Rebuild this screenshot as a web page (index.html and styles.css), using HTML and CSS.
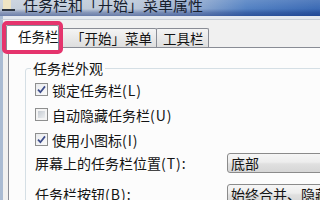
FILE: index.html
```html
<!DOCTYPE html>
<html lang="zh-CN">
<head>
<meta charset="utf-8">
<title>任务栏和「开始」菜单属性</title>
<link rel="stylesheet" href="styles.css">
</head>
<body>
<div class="window">
  <div class="titlebar">
    <svg class="app-icon" width="14" height="12" viewBox="0 0 14 12" aria-hidden="true">
      <rect x="1" y="0" width="8" height="9" fill="#eee4c4"/>
      <rect x="0" y="9" width="13" height="2" fill="#2c3542"/>
    </svg>
    <span class="title">任务栏和「开始」菜单属性</span>
  </div>
  <div class="frame-sep"></div>
  <div class="dialog">
    <div class="tabs">
      <div class="tab tab-active">任务栏</div>
      <div class="tab tab-start">「开始」菜单</div>
      <div class="tab tab-tools">工具栏</div>
    </div>
    <div class="panel">
      <fieldset class="group">
        <legend>任务栏外观</legend>
        <div class="row">
          <span class="cb cb-on"><svg width="11" height="11" viewBox="0 0 11 11" aria-hidden="true"><path d="M2 5.6 L4.4 8.2 L9 2.4" fill="none" stroke="#3d4c8a" stroke-width="1.7"/></svg></span>
          <span>锁定任务栏<span class="key">(L)</span></span>
        </div>
        <div class="row">
          <span class="cb cb-off"></span>
          <span>自动隐藏任务栏<span class="key">(U)</span></span>
        </div>
        <div class="row">
          <span class="cb cb-on"><svg width="11" height="11" viewBox="0 0 11 11" aria-hidden="true"><path d="M2 5.6 L4.4 8.2 L9 2.4" fill="none" stroke="#3d4c8a" stroke-width="1.7"/></svg></span>
          <span>使用小图标<span class="key">(I)</span></span>
        </div>
        <div class="row select-row">
          <span class="label">屏幕上的任务栏位置<span class="key">(T):</span></span>
          <div class="combo">底部</div>
        </div>
        <div class="row select-row second">
          <span class="label">任务栏按钮<span class="key">(B):</span></span>
          <div class="combo">始终合并、隐藏标签</div>
        </div>
      </fieldset>
    </div>
  </div>
</div>
</body>
</html>
```

FILE: styles.css
```css
html, body {
  margin: 0;
  padding: 0;
  overflow: hidden;
}

body {
  width: 320px;
  height: 200px;
  background: #f0f0f0;
  font-family: "Noto Sans CJK SC", "Noto Sans", sans-serif;
  color: #141414;
}

.window {
  width: 440px;
}

.titlebar {
  display: flex;
  align-items: flex-start;
  height: 16px;
  padding-left: 2px;
  background:
    linear-gradient(180deg, rgba(255,255,255,0.12) 0%, rgba(255,255,255,0) 55%, rgba(0,30,110,0.30) 78%, rgba(0,30,110,0.45) 100%),
    linear-gradient(90deg, #c7d0dc 0%, #bcc8d8 30%, #93abcf 44%, #5482c3 56%, #3c6bb5 72%, #4c7cc2 100%);
}

.app-icon {
  display: block;
  flex: none;
  margin-right: 7px;
}

.title {
  font-size: 15px;
  line-height: 10px;
  color: #17202e;
  white-space: nowrap;
}

.frame-sep {
  height: 3px;
  background: #e4e9ef;
  border-bottom: 1px solid #c9cfd6;
  border-left: 3px solid #a9bbd3;
}

.dialog {
  border-left: 3px solid #a9bbd3;
  padding-left: 3px;
  height: 180px;
  background: #f0f0f0;
}

.tabs {
  display: flex;
  align-items: flex-end;
  height: 27px;
  font-size: 13.5px;
}

.tab {
  box-sizing: border-box;
  height: 19px;
  border: 1px solid #898c95;
  border-bottom: none;
  border-radius: 2px 2px 0 0;
  background: linear-gradient(180deg, #f4f4f4 0%, #e9e9e9 50%, #dedede 100%);
  line-height: 18px;
  white-space: nowrap;
}

.tab-active {
  position: relative;
  z-index: 1;
  width: 53px;
  height: 25px;
  margin-bottom: -3px;
  padding-left: 11px;
  background: #ffffff;
  line-height: 21px;
}

.tab-active::after {
  content: "";
  position: absolute;
  top: -5px;
  left: -5px;
  right: -5px;
  bottom: -4px;
  border: 4px solid #e5346d;
  border-radius: 5px;
}

.tab-start {
  width: 98px;
  padding-left: 11px;
}

.tab-tools {
  width: 53px;
  margin-left: -1px;
  padding-left: 6px;
}

.panel {
  margin-left: 2px;
  border-left: 1px solid #898c95;
  border-top: 1px solid #898c95;
  background: #fcfcfc;
  padding: 12px 0 0 16px;
  height: 200px;
}

.group {
  margin: 0;
  padding: 1px 0 0 9px;
  border: 1px solid #d5dfe5;
  border-radius: 3px;
  width: 380px;
  min-inline-size: 0;
  font-size: 14px;
}

.group legend {
  padding: 0 2px;
  margin-left: -4px;
  font-size: 14px;
  line-height: 16px;
}

.row {
  display: flex;
  align-items: center;
  height: 25px;
  line-height: 18px;
  white-space: nowrap;
}

.key {
  letter-spacing: 1px;
}

.cb {
  box-sizing: border-box;
  flex: none;
  width: 13px;
  height: 13px;
  margin-right: 4px;
  border: 1px solid #8e8f8f;
  display: flex;
  align-items: center;
  justify-content: center;
}

.cb svg {
  display: block;
}

.cb-on {
  background: linear-gradient(135deg, #e9ebee 0%, #fafafa 100%);
}

.cb-off {
  padding: 2px;
  background: linear-gradient(135deg, #c6cbd2 0%, #eceef0 100%) content-box, #f4f4f4;
}

.select-row {
  height: 22px;
}

.second {
  margin-top: 9px;
}

.label {
  flex: none;
  width: 192px;
}

.combo {
  box-sizing: border-box;
  flex: none;
  width: 150px;
  height: 20px;
  padding-left: 3px;
  border: 1px solid #8b8b8b;
  border-radius: 3px;
  background: linear-gradient(180deg, #f6f6f6 0%, #ededed 45%, #e0e0e0 55%, #d6d6d6 100%);
  line-height: 18px;
}
```
